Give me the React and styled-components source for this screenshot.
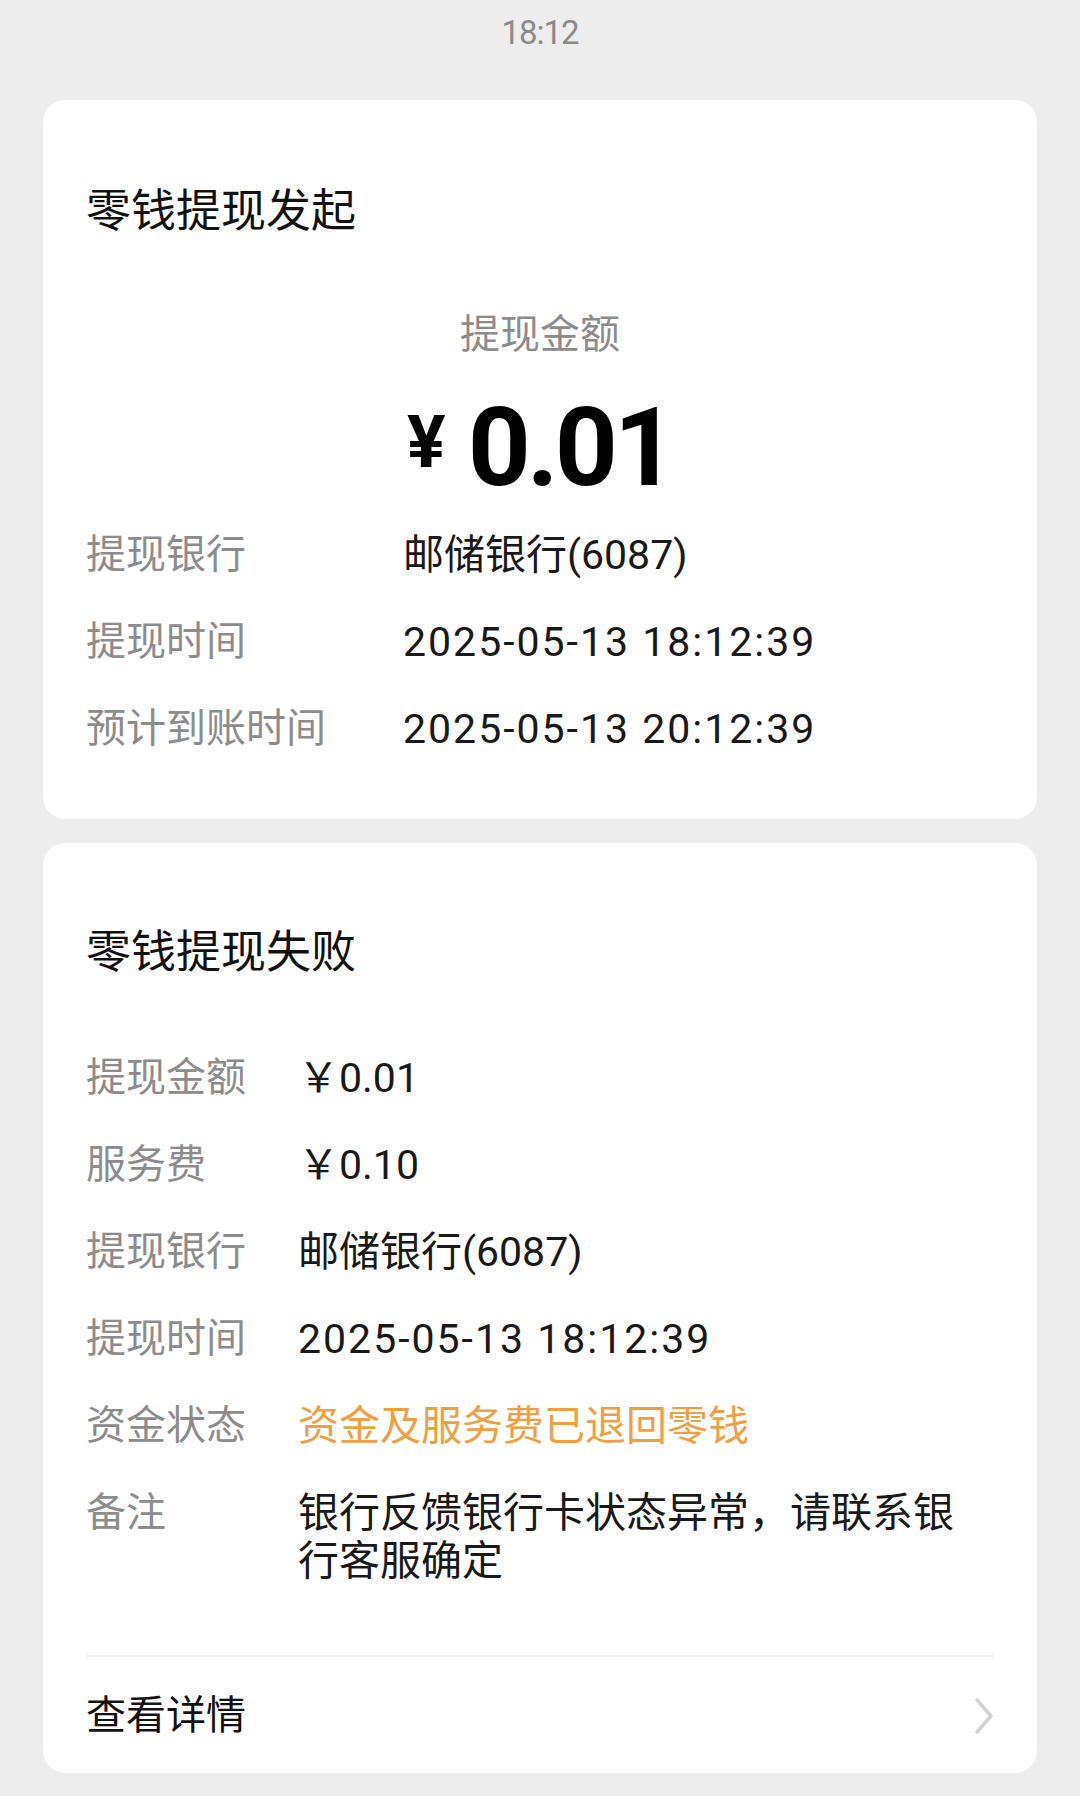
import styled, { createGlobalStyle } from "styled-components";

const GlobalStyle = createGlobalStyle`
  html, body {
    margin: 0;
    padding: 0;
    background: #ededed;
  }
  body {
    font-family: Roboto, "Noto Sans CJK SC", sans-serif;
    color: #191919;
    -webkit-font-smoothing: antialiased;
  }
`;

const initiated = [
  { label: "提现银行", value: "邮储银行(6087)" },
  { label: "提现时间", value: "2025-05-13 18:12:39", num: true },
  { label: "预计到账时间", value: "2025-05-13 20:12:39", num: true },
];

const failed = [
  { label: "提现金额", value: "￥0.01" },
  { label: "服务费", value: "￥0.10" },
  { label: "提现银行", value: "邮储银行(6087)" },
  { label: "提现时间", value: "2025-05-13 18:12:39", num: true },
  { label: "资金状态", value: "资金及服务费已退回零钱", accent: true },
  { label: "备注", value: "银行反馈银行卡状态异常，请联系银行客服确定" },
];

function InfoBlock({ rows, labelWidth, top }) {
  return (
    <InfoList $top={top}>
      {rows.map((row) => (
        <InfoRow key={row.label}>
          <Label $width={labelWidth}>{row.label}</Label>
          <Value $accent={row.accent} $num={row.num}>
            {row.value}
          </Value>
        </InfoRow>
      ))}
    </InfoList>
  );
}

export default function App() {
  return (
    <Page>
      <GlobalStyle />
      <StatusBar>18:12</StatusBar>

      <Content>
        <Card $top={82} $bottom={66}>
          <Title>零钱提现发起</Title>
          <AmountLabel>提现金额</AmountLabel>
          <Amount>
            <Yen>¥</Yen>
            <Digits>0.01</Digits>
          </Amount>
          <InfoBlock rows={initiated} labelWidth={317} top={27} />
        </Card>

        <Card $top={80} $bottom={0}>
          <Title>零钱提现失败</Title>
          <InfoBlock rows={failed} labelWidth={212} top={71} />
          <Divider />
          <DetailLink>
            <span>查看详情</span>
            <Chevron viewBox="0 0 20 36">
              <polyline points="3,2 17,18 3,34" />
            </Chevron>
          </DetailLink>
        </Card>
      </Content>
    </Page>
  );
}

const Page = styled.div`
  min-height: 1796px;
  background: #ededed;
  display: flex;
  flex-direction: column;
`;

const StatusBar = styled.div`
  height: 64px;
  display: flex;
  align-items: center;
  justify-content: center;
  font-size: 33px;
  color: #8a8a8a;
  letter-spacing: -1px;
`;

const Content = styled.div`
  display: flex;
  flex-direction: column;
  gap: 24px;
  padding: 36px 43px 24px;
`;

const Card = styled.div`
  background: #fff;
  border-radius: 22px;
  padding: ${(p) => p.$top}px 43px ${(p) => p.$bottom}px;
`;

const Title = styled.div`
  font-size: 45px;
  line-height: 60px;
  color: #111;
  font-weight: 400;
`;

const AmountLabel = styled.div`
  margin-top: 68px;
  text-align: center;
  font-size: 40px;
  line-height: 50px;
  color: #8c8c8c;
`;

const Amount = styled.div`
  margin-top: 32px;
  display: flex;
  justify-content: center;
  align-items: flex-start;
  font-weight: 700;
  color: #000;
`;

const Yen = styled.span`
  font-size: 72px;
  line-height: 72px;
  margin-top: 15px;
  margin-right: 22px;
`;

const Digits = styled.span`
  font-size: 110px;
  line-height: 112px;
  letter-spacing: -4px;
`;

const InfoList = styled.div`
  display: flex;
  flex-direction: column;
  gap: 39px;
  margin-top: ${(p) => p.$top}px;
`;

const InfoRow = styled.div`
  display: flex;
  align-items: flex-start;
  line-height: 48px;
`;

const Label = styled.div`
  flex: 0 0 ${(p) => p.$width}px;
  font-size: 40px;
  color: #8c8c8c;
`;

const Value = styled.div`
  flex: 1;
  max-width: 680px;
  font-size: 41px;
  color: ${(p) => (p.$accent ? "#efa042" : "#191919")};
  letter-spacing: ${(p) => (p.$num ? "2px" : "0")};
`;

const Divider = styled.div`
  margin-top: 70px;
  height: 2px;
  background: #f1f1f1;
`;

const DetailLink = styled.div`
  display: flex;
  align-items: center;
  justify-content: space-between;
  padding: 35px 0 33px;
  font-size: 40px;
  line-height: 48px;
  color: #111;
`;

const Chevron = styled.svg`
  width: 20px;
  height: 36px;
  fill: none;
  stroke: #d2d2d2;
  stroke-width: 3.5;
  stroke-linecap: round;
  stroke-linejoin: round;
`;
